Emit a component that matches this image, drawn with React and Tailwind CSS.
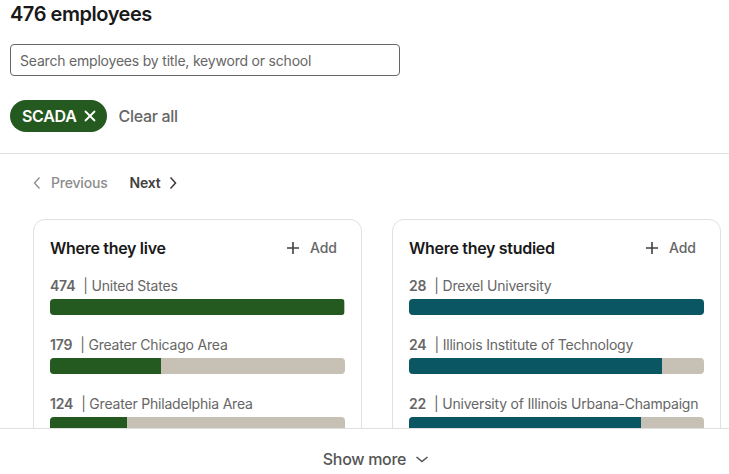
import React from "react";

const live = [
  { count: 474, label: "United States" },
  { count: 179, label: "Greater Chicago Area" },
  { count: 124, label: "Greater Philadelphia Area" },
];

const studied = [
  { count: 28, label: "Drexel University" },
  { count: 24, label: "Illinois Institute of Technology" },
  { count: 22, label: "University of Illinois Urbana-Champaign" },
];

function PlusIcon() {
  return (
    <svg width="16" height="16" viewBox="0 0 16 16" fill="none">
      <path d="M8 2v12M2 8h12" stroke="#404040" strokeWidth="1.6" />
    </svg>
  );
}

function InsightCard({ title, items, total, color }) {
  return (
    <div className="w-[329px] shrink-0 rounded-xl border border-[#e0e0e0] px-4 pt-[18px]">
      <div className="flex h-5 items-center justify-between">
        <h3 className="text-base font-semibold tracking-[-0.3px] text-[#191919]">{title}</h3>
        <button className="flex items-center gap-[9px] pr-2 text-sm font-medium text-[#666]">
          <PlusIcon />
          Add
        </button>
      </div>
      <ul className="mt-[18px]">
        {items.map((item) => (
          <li key={item.label} className="mb-5">
            <p className="h-5 whitespace-nowrap text-sm leading-5 tracking-[-0.2px] text-[#666]">
              <span className="font-semibold">{item.count}</span>
              <span className="ml-2">| {item.label}</span>
            </p>
            <div className="mt-[3px] h-4 w-full overflow-hidden rounded-sm bg-[#c7c0b4]">
              <div
                className="h-full"
                style={{ width: `${(item.count / total) * 100}%`, backgroundColor: color }}
              />
            </div>
          </li>
        ))}
      </ul>
    </div>
  );
}

export default function App() {
  return (
    <div className="flex h-[474px] w-[729px] flex-col overflow-hidden bg-white font-['Inter',sans-serif]">
      <div className="min-h-0 flex-1 overflow-hidden">
        <div className="px-[10px] pt-[2px]">
          <h2 className="text-xl font-semibold leading-6 tracking-[-0.45px] text-[#191919]">476 employees</h2>
          <input
            className="mt-[18px] h-8 w-[390px] rounded border border-[#666] px-[9px] text-sm tracking-[-0.2px] text-[#191919] placeholder:text-[#666]"
            placeholder="Search employees by title, keyword or school"
          />
          <div className="mt-6 flex items-center gap-3">
            <button className="flex h-8 items-center gap-[6px] rounded-full bg-[#24591f] pl-3 pr-[10px] text-base font-semibold tracking-[-0.3px] text-white">
              SCADA
              <svg width="14" height="14" viewBox="0 0 14 14" fill="none">
                <path d="M2 2l10 10M12 2L2 12" stroke="white" strokeWidth="1.8" />
              </svg>
            </button>
            <button className="text-base font-medium tracking-[-0.3px] text-[#666]">Clear all</button>
          </div>
        </div>
        <div className="mt-[21px] border-t border-[#e0e0e0]" />
        <div className="pl-[33px]">
          <div className="mt-[19px] flex items-center gap-[22px] text-sm font-medium tracking-[-0.2px]">
            <span className="flex items-center gap-[10px] text-[#8c8c8c]">
              <svg width="8" height="14" viewBox="0 0 8 14" fill="none">
                <path d="M6.5 1.5L1.5 7l5 5.5" stroke="#8c8c8c" strokeWidth="1.3" />
              </svg>
              Previous
            </span>
            <span className="flex items-center gap-[9px] font-semibold text-[#404040]">
              Next
              <svg width="8" height="14" viewBox="0 0 8 14" fill="none">
                <path d="M1.5 1.5L6.5 7l-5 5.5" stroke="#404040" strokeWidth="1.6" />
              </svg>
            </span>
          </div>
          <div className="mt-[26px] flex gap-[30px]">
            <InsightCard title="Where they live" items={live} total={476} color="#24591f" />
            <InsightCard title="Where they studied" items={studied} total={28} color="#0a5662" />
          </div>
        </div>
      </div>
      <div className="flex h-[46px] shrink-0 justify-center border-t border-[#e0e0e0] pl-6 pt-[20px]">
        <button className="flex h-5 items-center gap-2 text-base font-medium tracking-[-0.3px] text-[#555]">
          Show more
          <svg width="16" height="16" viewBox="0 0 16 16" fill="none">
            <path d="M2.5 6l5.5 4.5L13.5 6" stroke="#555" strokeWidth="1.6" />
          </svg>
        </button>
      </div>
    </div>
  );
}
